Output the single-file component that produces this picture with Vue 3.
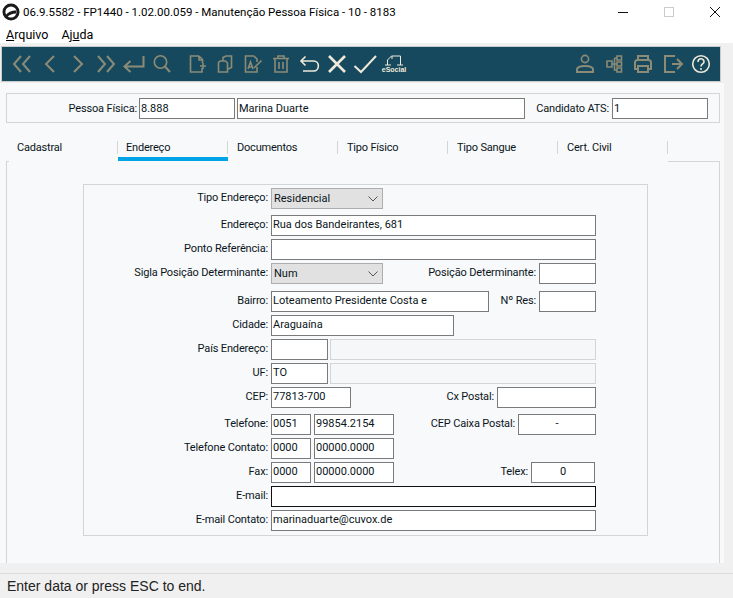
<script setup>
const tabs = [
  { name: 'Cadastral' },
  { name: 'Endereço', active: true },
  { name: 'Documentos' },
  { name: 'Tipo Físico' },
  { name: 'Tipo Sangue' },
  { name: 'Cert. Civil' }
]
</script>

<template>
  <div class="app">
    <header class="titlebar">
      <svg class="logo" width="18" height="18" viewBox="0 0 18 18">
        <circle cx="9" cy="9" r="8.500" fill="#1a1a1a" />
        <circle cx="9" cy="9" r="5.600" fill="#fff" />
        <path d="M3.500 12.500C6 9 9 7.500 14.500 7.500L14 10.500C10.500 10.500 7.500 11.500 5 14.500Z" fill="#1a1a1a" />
      </svg>
      <span class="title">06.9.5582 - FP1440 - 1.02.00.059 - Manutenção Pessoa Física - 10 - 8183</span>
      <div class="winctl">
        <svg width="46" height="24" viewBox="0 0 46 24"><path d="M18 12.500H28" stroke="#111" /></svg>
        <svg width="46" height="24" viewBox="0 0 46 24"><rect x="18.500" y="7.500" width="9" height="9" fill="none" stroke="#ccc" /></svg>
        <svg width="46" height="24" viewBox="0 0 46 24"><path d="M18 7L28 17M28 7L18 17" stroke="#111" /></svg>
      </div>
    </header>
    <nav class="menubar">
      <span><u>A</u>rquivo</span>
      <span>Aj<u>u</u>da</span>
    </nav>

    <div class="toolbar">
      <svg class="tool" viewBox="0 0 28 34"><path d="M13 9L6 17L13 25M22 9L15 17L22 25" class="muted thick" /></svg>
      <svg class="tool" viewBox="0 0 28 34"><path d="M18 9L10 17L18 25" class="muted thick" /></svg>
      <svg class="tool" viewBox="0 0 28 34"><path d="M10 9L18 17L10 25" class="muted thick" /></svg>
      <svg class="tool" viewBox="0 0 28 34"><path d="M6 9L13 17L6 25M15 9L22 17L15 25" class="muted thick" /></svg>
      <svg class="tool" viewBox="0 0 28 34"><path d="M23.500 9V19.500H5M10.500 14L4.500 19.500L10.500 25" class="muted thick" /></svg>
      <svg class="tool" viewBox="0 0 28 34"><circle cx="12.500" cy="15" r="6.200" class="muted" /><path d="M17 19.500L22 25" class="muted thick" /></svg>

      <svg class="tool gapped" viewBox="0 0 28 34"><path d="M16 9H7.500V25H19V21M16 9L19.500 12.500V16M16 9V13H19.500M17 19H23M20 16V22" class="muted" /></svg>
      <svg class="tool" viewBox="0 0 28 34"><path d="M12 13.500V10.500L15 9H20.500V20.500L17 22M9 14H14.500L16.500 16V25H7.500V15.500Z" class="muted" /></svg>
      <svg class="tool" viewBox="0 0 28 34"><path d="M15 9H6.500V25H18V20M15 9L18 12V15M9 22L11.500 15L14 22M10 20H13M15 21L22.500 13.500" class="muted" /></svg>
      <svg class="tool" viewBox="0 0 28 34"><path d="M6 11.500H22M11 11.500V9H17V11.500M8 11.500V25H20V11.500M12 15V22M16 15V22" class="muted" /></svg>
      <svg class="tool" viewBox="0 0 28 34"><path d="M6 14H18.500C25 14 25 24 18.500 24H8M10.500 9.500L6 14L10.500 18.500" class="bright" /></svg>
      <svg class="tool" viewBox="0 0 28 34"><path d="M6 9L22 25M22 9L6 25" class="bright heavy" /></svg>
      <svg class="tool" viewBox="0 0 28 34"><path d="M3.500 19L10 25L25 9" class="bright thick" /></svg>
      <div class="esocial">
        <svg width="24" height="11" viewBox="0 0 24 11"><path d="M5.500 10V5L9.500 1H18.500V10M10 1V4" fill="none" stroke="#eee9d8" stroke-width="1" /><path d="M3 10H9M15 10H21" stroke="#eee9d8" /></svg>
        <span>eSocial</span>
      </div>

      <div class="tools-right">
        <svg class="tool" viewBox="0 0 28 34"><circle cx="14" cy="12" r="3.600" class="muted" /><path d="M6 25V22.500C6 20.500 9 19 14 19C19 19 22 20.500 22 22.500V25Z" class="muted thick" /></svg>
        <svg class="tool" viewBox="0 0 28 34"><path d="M7 14H12V20H7ZM17 9H21.500V13H17ZM17 15H21.500V19H17ZM17 21H21.500V25H17ZM12 17H17M14.500 11V23H17M14.500 11H17" class="muted" /></svg>
        <svg class="tool" viewBox="0 0 28 34"><path d="M9 13V9H19V13M8.500 22H6V15.500C6 14 7 13 8.500 13H19.500C21 13 22 14 22 15.500V22H19.500M9 19H19V25H9Z" class="muted thick" /></svg>
        <svg class="tool" viewBox="0 0 28 34"><path d="M17 9H7V25H17M14 17H23M19 12L24 17L19 22" class="muted thick" /></svg>
        <svg class="tool" viewBox="0 0 28 34"><circle cx="14" cy="17" r="8.300" class="bright" /><path d="M11 15C11 10.800 17 10.800 17 14.800C17 17 14 17 14 19.500" class="bright" /><circle cx="14" cy="22" r="1" fill="#eee9d8" /></svg>
      </div>
    </div>

    <div class="workarea">
      <div class="person">
        <label>Pessoa Física:</label>
        <input class="w96" value="8.888" readonly />
        <input class="w288" value="Marina Duarte" readonly />
        <label class="ats">Candidato ATS:</label>
        <input class="w96" value="1" readonly />
      </div>

      <div class="tabs">
        <div v-for="tab in tabs" :key="tab.name" class="tab" :class="{ active: tab.active }">{{ tab.name }}</div>
      </div>

      <section class="panel">
        <div class="form">
          <div class="row first">
            <label>Tipo Endereço:</label>
            <div class="select w112"><span>Residencial</span><svg width="10" height="6" viewBox="0 0 10 6"><path d="M0.500 0.500L5 5L9.500 0.500" fill="none" stroke="#555" /></svg></div>
          </div>
          <div class="row sp6"><label>Endereço:</label><input class="fill" value="Rua dos Bandeirantes, 681" readonly /></div>
          <div class="row"><label>Ponto Referência:</label><input class="fill" readonly /></div>
          <div class="row">
            <label>Sigla Posição Determinante:</label>
            <div class="select w112"><span>Num</span><svg width="10" height="6" viewBox="0 0 10 6"><path d="M0.500 0.500L5 5L9.500 0.500" fill="none" stroke="#555" /></svg></div>
            <label class="side">Posição Determinante:</label><input class="w57" readonly />
          </div>
          <div class="row sp7">
            <label>Bairro:</label><input class="w218" value="Loteamento Presidente Costa e" readonly />
            <label class="side">Nº Res:</label><input class="w57" readonly />
          </div>
          <div class="row"><label>Cidade:</label><input class="w183" value="Araguaína" readonly /></div>
          <div class="row"><label>País Endereço:</label><input class="w57" readonly /><div class="disabled"></div></div>
          <div class="row"><label>UF:</label><input class="w57" value="TO" readonly /><div class="disabled"></div></div>
          <div class="row">
            <label>CEP:</label><input class="w80" value="77813-700" readonly />
            <label class="side">Cx Postal:</label><input class="w99" readonly />
          </div>
          <div class="row sp6">
            <label>Telefone:</label><input class="w40" value="0051" readonly /><input class="w80 next" value="99854.2154" readonly />
            <label class="side">CEP Caixa Postal:</label><input class="w78 center" value="-" readonly />
          </div>
          <div class="row">
            <label>Telefone Contato:</label><input class="w40" value="0000" readonly /><input class="w80 next" value="00000.0000" readonly />
          </div>
          <div class="row">
            <label>Fax:</label><input class="w40" value="0000" readonly /><input class="w80 next" value="00000.0000" readonly />
            <label class="side">Telex:</label><input class="w64 center" value="0" readonly />
          </div>
          <div class="row"><label>E-mail:</label><input class="fill focus" readonly /></div>
          <div class="row"><label>E-mail Contato:</label><input class="fill" value="marinaduarte@cuvox.de" readonly /></div>
        </div>
      </section>
    </div>

    <footer class="status">Enter data or press ESC to end.</footer>
  </div>
</template>

<style scoped>
.app {
  width: 733px;
  height: 598px;
  display: flex;
  flex-direction: column;
  overflow: hidden;
  background: #f0f0f0;
  font-family: "Roboto", "Liberation Sans", sans-serif;
  font-size: 11px;
  color: #0a1520;
}
label { letter-spacing: -0.15px; }
.titlebar {
  height: 24px;
  display: flex;
  align-items: center;
  background: #fff;
  color: #000;
  flex: none;
}
.logo { margin-left: 2px; margin-right: 3px; }
.title { flex: 1; white-space: nowrap; font-size: 11.5px; }
.winctl { display: flex; margin-right: -5px; }
.menubar {
  height: 19px;
  display: flex;
  gap: 13px;
  padding-left: 6px;
  padding-top: 3px;
  background: #fff;
  color: #000;
  font-size: 12.5px;
  flex: none;
  box-sizing: border-box;
}
.toolbar {
  margin: 4px 13px 2px 2px;
  height: 34px;
  padding-left: 6px;
  display: flex;
  background: #17495e;
  outline: 1px solid #c9cccc;
  flex: none;
}
.tool { width: 28px; height: 34px; flex: none; }
.gapped { margin-left: 7px; }
.muted, .bright { fill: none; stroke-width: 1.6; }
.muted { stroke: #8b8b76; }
.bright { stroke: #eee9d8; }
.thick { stroke-width: 2; }
.heavy { stroke-width: 2.6; }
.esocial {
  width: 26px;
  margin-left: 2px;
  padding-top: 8px;
  display: flex;
  flex-direction: column;
  align-items: center;
  box-sizing: border-box;
  color: #eee9d8;
  font: bold 7px/8px "Liberation Sans", sans-serif;
}
.tools-right { margin-left: auto; margin-right: 5px; display: flex; gap: 1px; }
.workarea {
  flex: 1;
  margin-right: 9px;
  padding: 10px 4px 0 6px;
  background: #f8f9fb;
  display: flex;
  flex-direction: column;
  min-height: 0;
}
.person {
  height: 30px;
  box-sizing: border-box;
  border: 1px solid #d3d5d6;
  display: flex;
  align-items: center;
  flex: none;
}
.person label { white-space: nowrap; }
.person label:first-child { width: 131px; text-align: right; padding-right: 1px; box-sizing: border-box; margin-right: 1px; }
.person .w288 { margin-left: 2px; }
.person .ats { width: 87px; text-align: right; padding-right: 3px; box-sizing: border-box; }
input {
  height: 21px;
  box-sizing: border-box;
  border: 1px solid #7a7a7a;
  background: #fff;
  padding: 0 1px;
  margin: 0;
  font: inherit;
  color: #0a1520;
  outline: none;
  border-radius: 0;
  flex: none;
}
.w96 { width: 96px; }
.w288 { width: 288px; }
.tabs { height: 38px; display: flex; padding-left: 2px; flex: none; position: relative; letter-spacing: -0.2px; }
.tab {
  width: 110px;
  box-sizing: border-box;
  padding: 16px 0 0 9px;
  position: relative;
  line-height: 17px;
}
.tab::after {
  content: "";
  position: absolute;
  right: 0;
  top: 18px;
  height: 13px;
  border-right: 1px solid #d3d5d6;
}
.tab.active { box-shadow: inset 0 -4px 0 #00a3e6; padding-left: 8px; }
.panel {
  flex: 1;
  border-right: 1px solid #d3d5d6;
  border-left: 1px solid #d3d5d6;
  padding: 23px 0 0 76px;
  position: relative;
  min-height: 0;
}
.panel::before {
  content: "";
  position: absolute;
  top: 0;
  right: 0;
  left: 661px;
  border-top: 1px solid #d3d5d6;
}
.panel::after {
  content: "";
  position: absolute;
  top: 0;
  left: 0;
  width: 2px;
  border-top: 1px solid #d3d5d6;
}
.form {
  width: 565px;
  height: 352px;
  box-sizing: border-box;
  border: 1px solid #d3d5d6;
  padding: 3px 51px 0 0;
}
.row { display: flex; align-items: center; height: 21px; margin-top: 3px; }
.row.first { margin-top: 0; }
.row.sp6 { margin-top: 6px; }
.row.sp7 { margin-top: 7px; }
.row label, .row input { padding-bottom: 2px; }
.row > label:first-child {
  width: 187px;
  padding-right: 3px;
  box-sizing: border-box;
  text-align: right;
  white-space: nowrap;
  flex: none;
}
.side { margin-left: auto; margin-right: 3px; white-space: nowrap; }
.fill { flex: 1; min-width: 0; }
.w57 { width: 57px; }
.w218 { width: 218px; }
.w183 { width: 183px; }
.w80 { width: 80px; }
.w99 { width: 99px; }
.w40 { width: 40px; }
.w78 { width: 78px; }
.w64 { width: 64px; margin-right: 1px; }
.w112 { width: 112px; }
.next { margin-left: 3px; }
.center { text-align: center; }
.focus { border-color: #111; }
.disabled {
  flex: 1;
  height: 21px;
  margin-left: 2px;
  box-sizing: border-box;
  border: 1px solid #d3d5d6;
  background: #f6f7f8;
}
.select {
  height: 21px;
  box-sizing: border-box;
  border: 1px solid #adadad;
  background: #e1e1e1;
  padding: 0 4px 0 2px;
  display: flex;
  align-items: center;
  justify-content: space-between;
  flex: none;
}
.status {
  height: 25px;
  margin-top: 10px;
  box-sizing: border-box;
  border-top: 1px solid #dcdcdc;
  padding: 3px 0 0 7px;
  font: 14px/19px "Liberation Sans", sans-serif;
  color: #222;
  flex: none;
}
</style>
